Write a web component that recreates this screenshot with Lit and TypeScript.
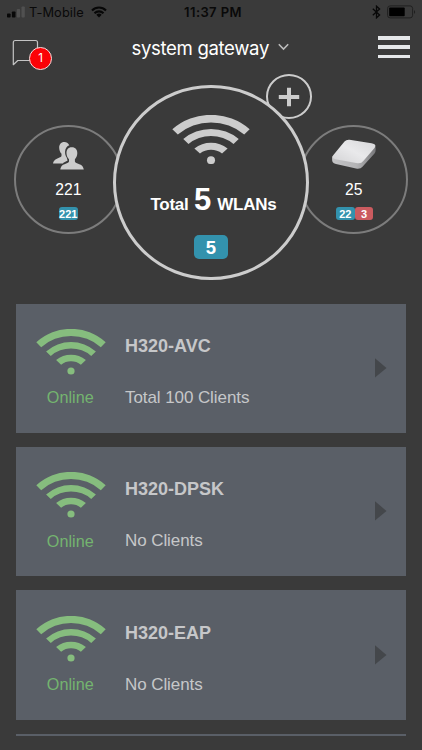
import { LitElement, html, css, svg, nothing } from "lit";
import { customElement, property } from "lit/decorators.js";

@customElement("wifi-icon")
class WifiIcon extends LitElement {
  static styles = css`
    :host { display: block; }
    svg { display: block; width: 100%; height: 100%; fill: currentColor; }
  `;
  render() {
    return html`<svg viewBox="0 0 70 46" preserveAspectRatio="none">
      <path d="M.3 13.3A51.5 51.5 0 0 1 69.7 13.3L64.8 18.2A45 45 0 0 0 5.2 18.2Z" />
      <path d="M10.1 22.4A37.7 37.7 0 0 1 59.9 22.4L55.2 26.9A31 31 0 0 0 14.8 26.9Z" />
      <path d="M20.1 31.1A23.6 23.6 0 0 1 49.9 31.1L44.9 35.7A16.1 16.1 0 0 0 25.1 35.7Z" />
      <circle cx="35" cy="42" r="3.6" />
    </svg>`;
  }
}

@customElement("wlan-card")
class WlanCard extends LitElement {
  @property() name = "";
  @property() clients = "";
  static styles = css`
    :host {
      box-sizing: border-box; flex: none; height: 129.4px; padding: 25.5px 19.5px 0 19px;
      display: flex; background: #5a5f67; color: #c6c7c9;
    }
    .status { width: 71px; display: flex; flex-direction: column; align-items: center; color: #86bd7e; }
    wifi-icon { width: 70px; height: 46px; }
    .state { font-size: 16.2px; line-height: 20px; margin-top: 12.4px; color: #74b46f; margin-left: -0.5px; }
    .info { flex: 1; margin-left: 19px; }
    .name { font-size: 18px; font-weight: 700; line-height: 22px; margin-top: 6px; }
    .clients { font-size: 17px; line-height: 20px; margin-top: 30.9px; letter-spacing: -0.08px; }
    .arrow { display: block; width: 12px; height: 20px; margin-top: 29px; fill: #44474b; }
  `;
  render() {
    if (!this.name) return nothing;
    return html`
      <div class="status"><wifi-icon></wifi-icon><div class="state">Online</div></div>
      <div class="info"><div class="name">${this.name}</div><div class="clients">${this.clients}</div></div>
      <svg class="arrow" viewBox="0 0 12 20"><path d="M0 .3L11.5 10L0 19.5Z" /></svg>
    `;
  }
}

const people = svg`
  <path d="M11.4 1C7.8 1 6 3.7 6.2 7c.1 2.7 1 4.4 2.3 5.7v2.1c-.2 1-1 1.4-2.500 2C3 18 .8 19 0 22.500h9.800c1.200-1.200 3-2 4.700-2.700-.3-1-.2-2-.7-3-1.300-1.800-1.900-4-1.700-6.500.2-3 1.900-5.200 4.200-6C15 2 13.500 1 11.400 1z"/>
  <path d="M18.800 6.300c-3.700 0-5.500 2.700-5.300 6.200.2 2.600 1 4.300 2.500 5.700v2.200c-.3 1.200-1.500 1.600-3.400 2.300-2.800 1-4.700 2-5.300 5.700h23.500c-.6-3.700-2.800-4.700-5.600-5.700-1.900-.7-3-1.100-3.300-2.300v-2.200c1.400-1.400 2.200-3.100 2.400-5.700.2-3.500-1.800-6.200-5.500-6.200z"/>`;

@customElement("app-root")
class AppRoot extends LitElement {
  static styles = css`
    :host {
      display: flex; flex-direction: column; box-sizing: border-box; height: 750px; overflow: hidden;
      background: #3a3a3a; color: #fff; font-family: "Liberation Sans", Arial, sans-serif; white-space: nowrap;
    }
    svg { display: block; flex: none; }
    .statusbar {
      height: 24px; flex: none; display: grid; grid-template-columns: 1fr auto 1fr; align-items: center;
      color: #090909; font-family: Inter, sans-serif; font-size: 12.8px; padding: 0 6px 0 7px; box-sizing: border-box;
    }
    .left, .right { display: flex; align-items: center; }
    .carrier { margin: 0 7px 0 4px; letter-spacing: 0.12px; }
    .time { font-weight: 600; font-size: 13px; letter-spacing: 0.4px; margin-left: 3px; }
    .right { justify-content: flex-end; gap: 6px; }
    .header { height: 50px; flex: none; display: grid; grid-template-columns: 112px 1fr 112px; align-items: start; }
    .messages { position: relative; width: 40px; margin: 15px 0 0 12px; }
    .count {
      position: absolute; left: 17px; top: 8px; width: 23px; height: 23px; box-sizing: border-box;
      border: 1.3px solid #f3dede; border-radius: 50%; background: #fb0207;
      font: 11.5px/21px Inter, sans-serif; text-align: center;
    }
    .title { display: flex; align-items: center; padding-left: 19.5px; margin-top: 12px; font: 18.6px/24px Inter, sans-serif; }
    .title span { letter-spacing: -0.35px; }
    .title svg { margin: -2px 0 0 8.5px; }
    .menu { justify-self: end; margin: 12px 12px 0 0; width: 32px; display: grid; gap: 5.7px; }
    .bar { height: 3.6px; background: #e5e7e9; }
    .hero { position: relative; height: 229.5px; flex: none; display: flex; justify-content: center; }
    .ring {
      box-sizing: border-box; width: 109.6px; height: 109.6px; margin-top: 50.8px; border: 2px solid #7c7c7c; border-radius: 50%;
      display: flex; flex-direction: column; align-items: center; font-size: 15.7px;
    }
    .ring > .people { margin-top: 14.3px; }
    .ring > .device { margin-top: 12px; }
    .main {
      z-index: 1; width: 195.4px; height: 195.4px; margin: 10.6px -9.8px 0; border: 3.6px solid #ccc; background: #3a3a3a;
      padding-top: 27px;
    }
    .main wifi-icon { width: 78px; height: 49.5px; color: #ccc; }
    .total { display: flex; align-items: baseline; font-size: 17px; line-height: 36px; font-weight: 700; margin: 18px 0 0 5px; }
    .total b { font-size: 31px; margin: 0 6px 0 5.5px; }
    .total span { letter-spacing: -0.25px; }
    .add {
      position: absolute; left: 265.5px; top: 0; width: 46.5px; height: 45px; box-sizing: border-box;
      border: 2px solid #ccc; border-radius: 50%; display: grid; place-items: center;
    }
    .figure { line-height: 18px; margin-top: 11.3px; }
    .chips { display: flex; margin-top: 7.6px; font-size: 11px; font-weight: 700; line-height: 14px; text-align: center; }
    .chip { width: 18.8px; height: 13.5px; border-radius: 3px; background: #3392ad; }
    .pair { margin-left: 2px; }
    .bad { background: #cb5b5f; }
    .big { width: 34px; height: 24px; border-radius: 5px; font-size: 18.5px; line-height: 25px; font-weight: 700; text-align: center; margin-top: 11.5px; }
    .list { height: 432.5px; flex: none; overflow: hidden; display: flex; flex-direction: column; gap: 14.1px; padding: 0 16px; }
  `;
  render() {
    return html`
      <div class="statusbar">
        <div class="left">
          <svg width="18" height="12" viewBox="0 0 18 12"><rect x="0" y="7.500" width="3.600" height="4" rx=".8" fill="#080808"/><rect x="4.900" y="5.500" width="3.600" height="6" rx=".8" fill="#080808"/><rect x="9.800" y="3" width="3.300" height="8.500" rx=".8" fill="#505050"/><rect x="14.500" y=".5" width="3.300" height="11" rx=".8" fill="#505050"/></svg>
          <span class="carrier">T-Mobile</span>
          <svg width="16" height="12" viewBox="0 0 16 12"><g fill="none" stroke="#070707" stroke-width="2.100"><path d="M1 4.500C5 .5 11 .5 15 4.500M3.500 7.200C6 4.700 10 4.700 12.500 7.200"/></g><path d="M5.300 8.700Q8 6.300 10.700 8.700L8 11.500Z" fill="#070707"/></svg>
        </div>
        <span class="time">11:37 PM</span>
        <div class="right">
          <svg width="9" height="14" viewBox="0 0 9 14"><path d="M.8 3.800L7.600 9.900L4.500 12.800V1.200L7.600 4.100L.8 10.200" fill="none" stroke="#080808" stroke-width="1.300"/></svg>
          <svg width="29" height="14" viewBox="0 0 29 14"><rect x=".6" y=".9" width="25" height="12" rx="2.500" fill="none" stroke="#202020" stroke-width="1"/><rect x="2.200" y="2.500" width="15.500" height="8.800" rx=".8" fill="#000"/><path d="M27 5Q29.300 6.900 27 9Z" fill="#202020"/></svg>
        </div>
      </div>
      <div class="header">
        <div class="messages">
          <svg width="28" height="28" viewBox="0 0 28 28"><path d="M3.300 1.500H23.600Q25.500 1.500 25.500 3.400V21.500H5.800L1.300 25.700V3.400Q1.300 1.500 3.300 1.500Z" fill="none" stroke="#c4c4c4" stroke-width="1.200" stroke-linejoin="round"/></svg>
          <div class="count">1</div>
        </div>
        <div class="title"><span>system gateway</span>
          <svg width="11" height="8" viewBox="0 0 11 8"><path d="M.8 1.200L5.500 6L10.200 1.200" fill="none" stroke="#bcbcbc" stroke-width="1.600"/></svg>
        </div>
        <div class="menu"><div class="bar"></div><div class="bar"></div><div class="bar"></div></div>
      </div>
      <div class="hero">
        <div class="add"><svg width="22" height="20" viewBox="0 0 22 20"><path d="M11 .7V19.300M.8 10H21.200" stroke="#ccc" stroke-width="4"/></svg></div>
        <div class="ring">
          <svg class="people" width="31" height="29" viewBox="0 0 31 29" fill="#ccc">${people}</svg>
          <div class="figure">221</div>
          <div class="chips"><div class="chip">221</div></div>
        </div>
        <div class="ring main">
          <wifi-icon></wifi-icon>
          <div class="total"><span>Total</span><b>5</b><span>WLANs</span></div>
          <div class="chip big">5</div>
        </div>
        <div class="ring">
          <svg class="device" width="44" height="31" viewBox="0 0 44 31">
            <defs>
              <linearGradient id="top" x1="0" y1="1" x2="1" y2="0"><stop offset="0" stop-color="#d2d2d4"/><stop offset=".5" stop-color="#e9e9eb"/><stop offset="1" stop-color="#d6d6d8"/></linearGradient>
              <linearGradient id="side" x1="0" y1="0" x2="1" y2="0"><stop offset="0" stop-color="#c4c4c6"/><stop offset=".55" stop-color="#b4b4b6"/><stop offset=".7" stop-color="#a2a2a4"/><stop offset="1" stop-color="#77777a"/></linearGradient>
            </defs>
            <path d="M.2 17.500Q-.2 22.500 .8 23.300Q1.500 24.300 4 25L24 29.500Q28.500 30.300 30.500 27.700L42.500 14.500Q44.200 12.500 43.500 8Z" fill="url(#side)"/>
            <path d="M12.500 2.500Q14.300 .5 17.500 .8L39.500 4.200Q45.500 5.500 42.300 9.200L31.500 21.800Q29.300 24.800 25.500 24.200L3.500 20.200Q-1.200 19 1.400 16Z" fill="url(#top)"/>
          </svg>
          <div class="figure">25</div>
          <div class="chips pair"><div class="chip">22</div><div class="chip bad">3</div></div>
        </div>
      </div>
      <div class="list">
        <wlan-card name="H320-AVC" clients="Total 100 Clients"></wlan-card>
        <wlan-card name="H320-DPSK" clients="No Clients"></wlan-card>
        <wlan-card name="H320-EAP" clients="No Clients"></wlan-card>
        <wlan-card></wlan-card>
      </div>
    `;
  }
}
